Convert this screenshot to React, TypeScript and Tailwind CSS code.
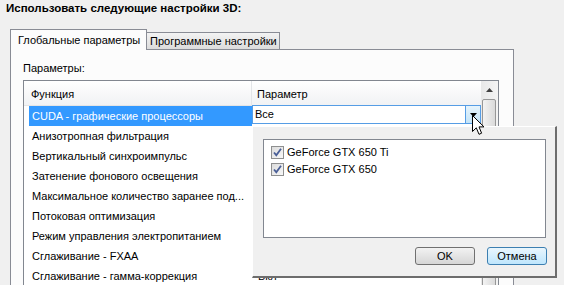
import React from "react";

const rows: [string, string][] = [
  ["CUDA - графические процессоры", "Все"],
  ["Анизотропная фильтрация", "16x"],
  ["Вертикальный синхроимпульс", "Вкл"],
  ["Затенение фонового освещения", "Выкл"],
  ["Максимальное количество заранее под...", "1"],
  ["Потоковая оптимизация", "Авто"],
  ["Режим управления электропитанием", "Адаптивный"],
  ["Сглаживание - FXAA", "Выкл"],
  ["Сглаживание - гамма-коррекция", "Вкл"],
];

function CheckBox() {
  return (
    <div className="w-[13px] h-[13px] shrink-0 border border-[#8e8f8f] bg-gradient-to-br from-[#dcdcdc] to-[#f8f8f8] flex items-center justify-center">
      <svg width="11" height="11" viewBox="0 0 11 11">
        <path d="M2 5.5 L4.3 8.2 L9 1.8" fill="none" stroke="#4a5f97" strokeWidth="1.8" />
      </svg>
    </div>
  );
}

export default function App() {
  return (
    <div className="relative w-[564px] h-[285px] overflow-hidden bg-[#f0f0f0] text-[11px] text-black font-['Liberation_Sans',Arial,sans-serif]">
      <div className="pl-[6px] pt-[1px] h-[17px] text-[11.5px] font-bold leading-[15px] whitespace-nowrap">
        Использовать следующие настройки 3D:
      </div>
      <div className="flex items-end ml-[10px] mt-[12px] h-[20px] whitespace-nowrap">
        <div className="relative z-10 -mb-px w-[137px] h-[21px] pl-[7px] pt-[3px] leading-[14px] border border-b-0 border-[#898c95] bg-[#fcfcfc]">
          Глобальные параметры
        </div>
        <div className="w-[133px] h-[17px] pl-[3px] pt-[1px] leading-[14px] border border-l-0 border-b-0 border-[#898c95] bg-gradient-to-b from-[#f3f3f3] to-[#dcdcdc]">
          Программные настройки
        </div>
      </div>
      <div className="ml-[10px] w-[504px] h-[300px] border border-[#898c95] bg-[#fcfcfc] px-[12px]">
        <div className="pt-[10px] h-[30px] leading-[16px]">Параметры:</div>
        <div className="w-[476px] h-[230px] border border-[#828790] bg-white flex">
          <div className="flex-1 flex flex-col">
            <div className="h-[25px] flex border-b border-[#e5e5e5] bg-gradient-to-b from-white to-[#f1f2f4] leading-[16px]">
              <div className="w-[228px] pl-[7px] pt-[5px] border-r border-[#e3e5e8]">Функция</div>
              <div className="flex-1 pl-[5px] pt-[5px]">Параметр</div>
            </div>
            {rows.map(([f, v], i) => (
              <div key={i} className="h-[20px] flex pl-[5px] leading-[20px]">
                <div
                  className={
                    i === 0
                      ? "w-[223px] pl-[3px] bg-[#3399ff] text-white whitespace-nowrap overflow-hidden"
                      : "w-[223px] pl-[3px] whitespace-nowrap overflow-hidden"
                  }
                >
                  {f}
                </div>
                {i === 0 ? (
                  <div className="flex-1 -mt-px h-[19px] flex border border-[#569de5] bg-white">
                    <div className="flex-1 pl-[2px] leading-[17px]">{v}</div>
                    <div className="w-[15px] h-full border-l border-[#569de5] bg-gradient-to-b from-[#e6f4fc] to-[#c4e4f8] flex items-center justify-center">
                      <svg width="7" height="4" viewBox="0 0 7 4">
                        <path d="M0 0 L7 0 L3.5 4 Z" fill="#000" />
                      </svg>
                    </div>
                  </div>
                ) : (
                  <div className="flex-1 pl-[6px] whitespace-nowrap overflow-hidden">{v}</div>
                )}
              </div>
            ))}
          </div>
          <div className="w-[17px] flex flex-col bg-gradient-to-r from-[#e8e8e8] to-[#f4f4f4]">
            <div className="h-[18px] flex items-center justify-center">
              <svg width="7" height="4" viewBox="0 0 7 4">
                <path d="M0 4 L7 4 L3.5 0 Z" fill="#404040" />
              </svg>
            </div>
            <div className="ml-px mr-[2px] flex-1 rounded-[2px] border border-[#979797] bg-gradient-to-r from-[#f3f3f3] to-[#dadada]" />
          </div>
        </div>
      </div>

      {/* Dropdown popup */}
      <div className="absolute left-[252px] top-[126px] w-[305px] h-[152px] bg-[#f0f0f0] border-l border-t border-white border-r-2 border-b-2 border-r-[#6d6d6d] border-b-[#6d6d6d]">
        <div className="ml-[10px] mt-[12px] w-[283px] h-[99px] border border-[#828790] bg-white pl-[7px] pt-[6px]">
          {["GeForce GTX 650 Ti", "GeForce GTX 650"].map((t) => (
            <div key={t} className="h-[17px] flex items-start gap-[3px] whitespace-nowrap">
              <CheckBox />
              <span className="leading-[13px]">{t}</span>
            </div>
          ))}
        </div>
        <div className="mt-[9px] flex justify-end gap-[12px] pr-[8px]">
          <div className="w-[60px] h-[18px] rounded-[3px] border border-[#707070] bg-gradient-to-b from-[#f2f2f2] to-[#d6d6d6] flex items-center justify-center">
            OK
          </div>
          <div className="w-[60px] h-[18px] rounded-[3px] border border-[#3c7fb1] bg-gradient-to-b from-[#eaf6fd] to-[#bee6fd] flex items-center justify-center">
            Отмена
          </div>
        </div>
      </div>

      {/* Mouse cursor */}
      <svg className="absolute left-[472px] top-[115px]" width="14" height="22" viewBox="0 0 14 22">
        <path
          d="M0.5 0.5 L0.5 16.5 L4.3 12.8 L7 19.3 L9.6 18.2 L7 11.9 L12 11.9 Z"
          fill="#fff"
          stroke="#000"
          strokeWidth="1"
          strokeLinejoin="round"
        />
      </svg>
    </div>
  );
}
